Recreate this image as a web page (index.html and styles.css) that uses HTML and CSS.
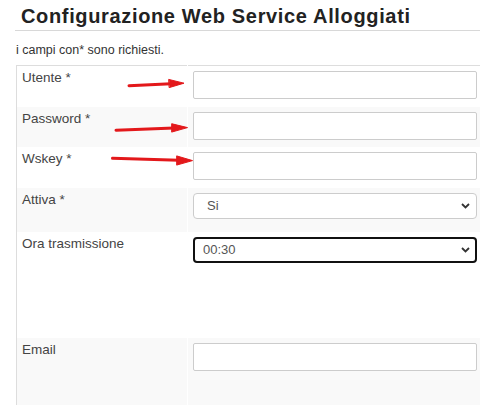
FILE: index.html
```html
<html lang="it">
<head>
    <meta charset="UTF-8">
    <meta name="viewport" content="width=device-width, initial-scale=1.0">
    <title>Configurazione Web Service Alloggiati</title>
    <link rel="stylesheet" href="styles.css">
</head>
<body>
    <div class="page">
        <h1 class="title">Configurazione Web Service Alloggiati</h1>
        <p class="note">i campi con* sono richiesti.</p>
        <table class="config">
            <tr class="row-a">
                <td class="label">Utente *</td>
                <td class="field"><input type="text" class="control"></td>
            </tr>
            <tr class="row-b">
                <td class="label">Password *</td>
                <td class="field"><input type="password" class="control"></td>
            </tr>
            <tr class="row-a">
                <td class="label">Wskey *</td>
                <td class="field"><input type="text" class="control"></td>
            </tr>
            <tr class="row-c">
                <td class="label">Attiva *</td>
                <td class="field">
                    <div class="select-wrap">
                        <select class="control select">
                            <option>Si</option>
                            <option>No</option>
                        </select>
                        <svg class="chevron" width="9" height="6" viewBox="0 0 9 6"><path d="M1 1 L4.5 4.5 L8 1" fill="none" stroke="#333" stroke-width="1.8"/></svg>
                    </div>
                </td>
            </tr>
            <tr class="row-tall">
                <td class="label">Ora trasmissione</td>
                <td class="field">
                    <div class="select-wrap">
                        <select class="control select focused">
                            <option>00:30</option>
                            <option>01:00</option>
                            <option>01:30</option>
                        </select>
                        <svg class="chevron" width="9" height="6" viewBox="0 0 9 6"><path d="M1 1 L4.5 4.5 L8 1" fill="none" stroke="#333" stroke-width="1.8"/></svg>
                    </div>
                </td>
            </tr>
            <tr class="row-last">
                <td class="label">Email</td>
                <td class="field"><input type="text" class="control"></td>
            </tr>
        </table>
    </div>

    <!-- red annotation arrows -->
    <svg class="arrows" width="480" height="405" viewBox="0 0 480 405">
        <g stroke="#e3181b" stroke-width="3" stroke-linecap="round" fill="#e3181b">
            <line x1="129" y1="85.8" x2="171" y2="83.8"/>
            <polygon points="169,79.5 184,83.2 169.5,87.5" stroke-width="1"/>
            <line x1="116" y1="130.3" x2="174" y2="128"/>
            <polygon points="172,123.8 187.5,127.6 172,132" stroke-width="1"/>
            <line x1="112.5" y1="158.3" x2="179" y2="160.3"/>
            <polygon points="177,156 192.5,160.6 177,165" stroke-width="1"/>
        </g>
    </svg>
</body>
</html>
```

FILE: styles.css
```css
body {
    margin: 0;
    background-color: white;
    overflow: hidden;
    font-family: "Liberation Sans", Arial, sans-serif;
    color: #333;
}

.page {
    padding-left: 16px;
}

.title {
    margin: 0 0 0 -1px;
    padding: 5px 0 3px 6px;
    font-size: 20px;
    line-height: 22px;
    font-weight: bold;
    letter-spacing: 0.65px;
    color: #222;
    border-bottom: 1px solid #d8d8d8;
}

.note {
    margin: 12px 0 7px 0;
    font-size: 12.5px;
    line-height: 15px;
    color: #333;
}

.config {
    width: 470px;
    border-collapse: collapse;
    border: 1px solid #ddd;
    font-size: 13.5px;
}

.config td {
    vertical-align: top;
    padding: 0;
}

.config .label {
    width: 160px;
    padding: 3px 5px 0 5px;
    line-height: 18px;
    color: #444;
}

.config .field {
    padding: 5px 5px 0 5px;
    border-left: 1px solid #fff;
}

.row-a { height: 41px; }
.row-b { height: 40px; background-color: #f9f9f9; }
.row-c { height: 44px; background-color: #f9f9f9; }
.row-tall { height: 106px; }
.row-last { height: 80px; background-color: #f9f9f9; }

.control {
    display: block;
    box-sizing: border-box;
    width: 284px;
    height: 28px;
    margin: 0;
    padding: 0 10px;
    border: 1px solid #ccc;
    border-radius: 2px;
    background-color: white;
    font-family: "Liberation Sans", Arial, sans-serif;
    font-size: 13px;
    color: #555;
    outline: none;
}

.select-wrap {
    position: relative;
    width: 284px;
}

.select {
    height: 26px;
    border-radius: 4px;
    padding: 0 10px 0 13px;
    appearance: none;
    -webkit-appearance: none;
}

.select.focused {
    border: 2px solid #111;
    padding-left: 8px;
}

.chevron {
    position: absolute;
    right: 7px;
    top: 10px;
}

.arrows {
    position: absolute;
    top: 0;
    left: 0;
    pointer-events: none;
}
```
